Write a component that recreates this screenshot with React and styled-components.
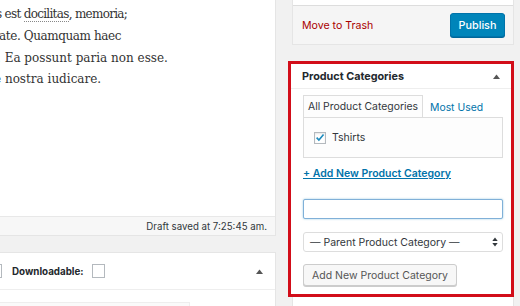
import React from "react";
import styled, { createGlobalStyle } from "styled-components";

const GlobalStyle = createGlobalStyle`
  html, body {
    margin: 0;
    padding: 0;
    background: #f1f1f1;
    overflow: hidden;
  }
  * { box-sizing: border-box; }
`;

const ui = `"Inter", "Liberation Sans", sans-serif`;

/* page layout */
const Page = styled.div`
  display: flex;
  width: 520px;
  height: 306px;
  overflow: hidden;
  background: #f1f1f1;
  font-family: ${ui};
  color: #23282d;
`;

const LeftCol = styled.div`
  width: 276px;
  flex-shrink: 0;
  display: flex;
  flex-direction: column;
`;

const RightCol = styled.div`
  width: 226px;
  margin-left: 12px;
  flex-shrink: 0;
  display: flex;
  flex-direction: column;
`;

/* editor */
const EditorWrap = styled.div`
  border-right: 1px solid #e5e5e5;
  border-bottom: 1px solid #e5e5e5;
  background: #fff;
`;

const EditorBody = styled.div`
  height: 216px;
  padding-top: 4px;
  overflow: hidden;
  font-family: "DejaVu Serif", "Liberation Serif", serif;
  font-size: 12px;
  line-height: 21.8px;
  color: #333;
  white-space: nowrap;
`;

const TextLine = styled.div`
  margin-left: ${(p) => p.$shift || 0}px;
  letter-spacing: ${(p) => p.$track || 0}px;
`;

const Dotted = styled.span`
  border-bottom: 1px dotted #888;
`;

const StatusBar = styled.div`
  height: 19px;
  background: #f7f7f7;
  border-top: 1px solid #e8e8e8;
  display: flex;
  align-items: center;
  justify-content: flex-end;
  padding-right: 8px;
  font-size: 9.7px;
  color: #32373c;
`;

/* product data box */
const ProductBox = styled.div`
  margin-top: 16px;
  margin-left: -1px;
  flex: 1;
  background: #fff;
  border: 1px solid #e5e5e5;
  border-bottom: none;
`;

const ProductHeader = styled.div`
  height: 37px;
  display: flex;
  align-items: center;
  padding: 0 12px 0 0;
  border-bottom: 1px solid #eee;
  font-size: 9.8px;
  font-weight: 700;
`;

const HeaderLabel = styled.span`
  margin-left: ${(p) => p.$gap || 0}px;
`;

const EmptyBox = styled.span`
  display: inline-block;
  width: 13px;
  height: 14px;
  border: 1px solid #b4b9be;
  background: #fff;
  margin-left: ${(p) => p.$gap || 0}px;
`;

const Spacer = styled.span`
  flex: 1;
`;

const ProductInner = styled.div`
  margin-top: 12px;
  width: 190px;
  height: 20px;
  border-top: 1px solid #eee;
  border-right: 1px solid #eee;
  background: #fafafa;
`;

/* publish box */
const PublishBox = styled.div`
  margin: -10px 0 0 4px;
  width: 222px;
  background: #fff;
  border: 1px solid #e5e5e5;
`;

const PublishTop = styled.div`
  height: 14px;
`;

const MajorActions = styled.div`
  height: 39px;
  background: #f5f5f5;
  border-top: 1px solid #ddd;
  display: flex;
  align-items: center;
  justify-content: space-between;
  padding: 0 8px 0 9px;
`;

const TrashLink = styled.span`
  font-size: 10.6px;
  color: #a00;
`;

const PrimaryButton = styled.span`
  width: 55px;
  height: 24px;
  display: flex;
  align-items: center;
  justify-content: center;
  background: #0085ba;
  border: 1px solid #0073aa;
  border-radius: 3px;
  box-shadow: 0 1px 0 #006799;
  color: #fff;
  font-size: 10.8px;
  font-weight: 500;
`;

/* highlighted categories box */
const Highlight = styled.div`
  margin-top: 16px;
  border: 3px solid #d20d19;
  background: #fff;
`;

const NextBox = styled.div`
  flex: 1;
  margin-left: 4px;
  width: 222px;
  background: #fff;
  border-left: 1px solid #e5e5e5;
  border-right: 1px solid #e5e5e5;
`;

const BoxHeader = styled.div`
  height: 25px;
  display: flex;
  align-items: center;
  justify-content: space-between;
  padding: 0 11px 0 11px;
  border-bottom: 1px solid #eee;
  font-size: 10.8px;
  font-weight: 700;
  color: #23282d;
`;

const BoxBody = styled.div`
  padding: 7px 8px 8px 12px;
  display: flex;
  flex-direction: column;
  align-items: flex-start;
`;

const Tabs = styled.div`
  display: flex;
  align-items: flex-end;
  height: 21px;
  position: relative;
  z-index: 1;
`;

const Tab = styled.span`
  height: ${(p) => (p.$active ? "22px" : "21px")};
  display: flex;
  align-items: center;
  padding: 0 ${(p) => (p.$active ? "4px" : "6px")};
  font-size: 10.4px;
  color: ${(p) => (p.$active ? "#32373c" : "#0073aa")};
  background: ${(p) => (p.$active ? "#fdfdfd" : "transparent")};
  border: 1px solid ${(p) => (p.$active ? "#ddd" : "transparent")};
  border-bottom: none;
`;

const TabPanel = styled.div`
  width: 200px;
  height: 41px;
  border: 1px solid #ddd;
  background: #fdfdfd;
  display: flex;
  align-items: center;
  padding: 0 0 0 10px;
`;

const CheckRow = styled.label`
  display: flex;
  align-items: center;
  gap: 6px;
  font-size: 10.5px;
  color: #32373c;
`;

const CheckBox = styled.span`
  width: 12px;
  height: 12px;
  border: 1px solid #b4b9be;
  background: #fff;
  box-shadow: inset 0 1px 2px rgba(0, 0, 0, 0.1);
  display: flex;
  align-items: center;
  justify-content: center;
`;

const AddLink = styled.span`
  margin-top: 9px;
  line-height: 14px;
  font-size: 10.5px;
  font-weight: 600;
  color: #0073aa;
  text-decoration: underline;
`;

const TextInput = styled.div`
  margin-top: 18px;
  width: 200px;
  height: 20px;
  border: 1px solid #80b0d8;
  border-radius: 2px;
  background: #fff;
  box-shadow: 0 0 2px rgba(30, 140, 190, 0.5);
`;

const Select = styled.div`
  margin-top: 13px;
  width: 200px;
  height: 20px;
  border: 1px solid #ddd;
  border-radius: 3px;
  background: #fff;
  display: flex;
  align-items: center;
  justify-content: space-between;
  padding: 0 4px 0 6px;
  font-size: 10.5px;
  color: #32373c;
`;

const SecondaryButton = styled.span`
  margin-top: 12px;
  height: 22px;
  padding: 0 8px;
  display: flex;
  align-items: center;
  background: #f7f7f7;
  border: 1px solid #ccc;
  border-radius: 3px;
  box-shadow: 0 1px 0 #ccc;
  font-size: 10.5px;
  color: #555;
`;

const Toggle = ({ color = "#555" }) => (
  <svg width="7" height="5" viewBox="0 0 7 5">
    <polygon points="0,5 3.5,0.5 7,5" fill={color} />
  </svg>
);

const SelectArrows = () => (
  <svg width="6" height="10" viewBox="0 0 6 10">
    <polygon points="0.3,4 3,0.5 5.7,4" fill="#32373c" />
    <polygon points="0.3,6 3,9.5 5.7,6" fill="#32373c" />
  </svg>
);

const Check = () => (
  <svg width="11" height="11" viewBox="0 0 11 11">
    <path d="M1.8 5.6 L4.3 8.3 L9.4 2.2" fill="none" stroke="#1e8cbe" strokeWidth="1.8" />
  </svg>
);

export default function App() {
  return (
    <>
      <GlobalStyle />
      <Page>
        <LeftCol>
          <EditorWrap>
            <EditorBody>
              <TextLine $shift={-4} $track={-0.7}>
                s est <Dotted>docilitas</Dotted>, memoria;
              </TextLine>
              <TextLine $shift={-1} $track={-0.4}>ate. Quamquam haec</TextLine>
              <TextLine $shift={-3}>. Ea possunt paria non esse.</TextLine>
              <TextLine $shift={-6}>e nostra iudicare.</TextLine>
            </EditorBody>
            <StatusBar>Draft saved at 7:25:45 am.</StatusBar>
          </EditorWrap>

          <ProductBox>
            <ProductHeader>
              <EmptyBox $gap={-11} />
              <HeaderLabel $gap={10}>Downloadable:</HeaderLabel>
              <EmptyBox $gap={8} />
              <Spacer />
              <Toggle />
            </ProductHeader>
            <ProductInner />
          </ProductBox>
        </LeftCol>

        <RightCol>
          <PublishBox>
            <PublishTop />
            <MajorActions>
              <TrashLink>Move to Trash</TrashLink>
              <PrimaryButton>Publish</PrimaryButton>
            </MajorActions>
          </PublishBox>

          <Highlight>
            <BoxHeader>
              <span>Product Categories</span>
              <Toggle />
            </BoxHeader>
            <BoxBody>
              <Tabs>
                <Tab $active>All Product Categories</Tab>
                <Tab>Most Used</Tab>
              </Tabs>
              <TabPanel>
                <CheckRow>
                  <CheckBox>
                    <Check />
                  </CheckBox>
                  Tshirts
                </CheckRow>
              </TabPanel>
              <AddLink>+ Add New Product Category</AddLink>
              <TextInput />
              <Select>
                <span>— Parent Product Category —</span>
                <SelectArrows />
              </Select>
              <SecondaryButton>Add New Product Category</SecondaryButton>
            </BoxBody>
          </Highlight>
          <NextBox />
        </RightCol>
      </Page>
    </>
  );
}
